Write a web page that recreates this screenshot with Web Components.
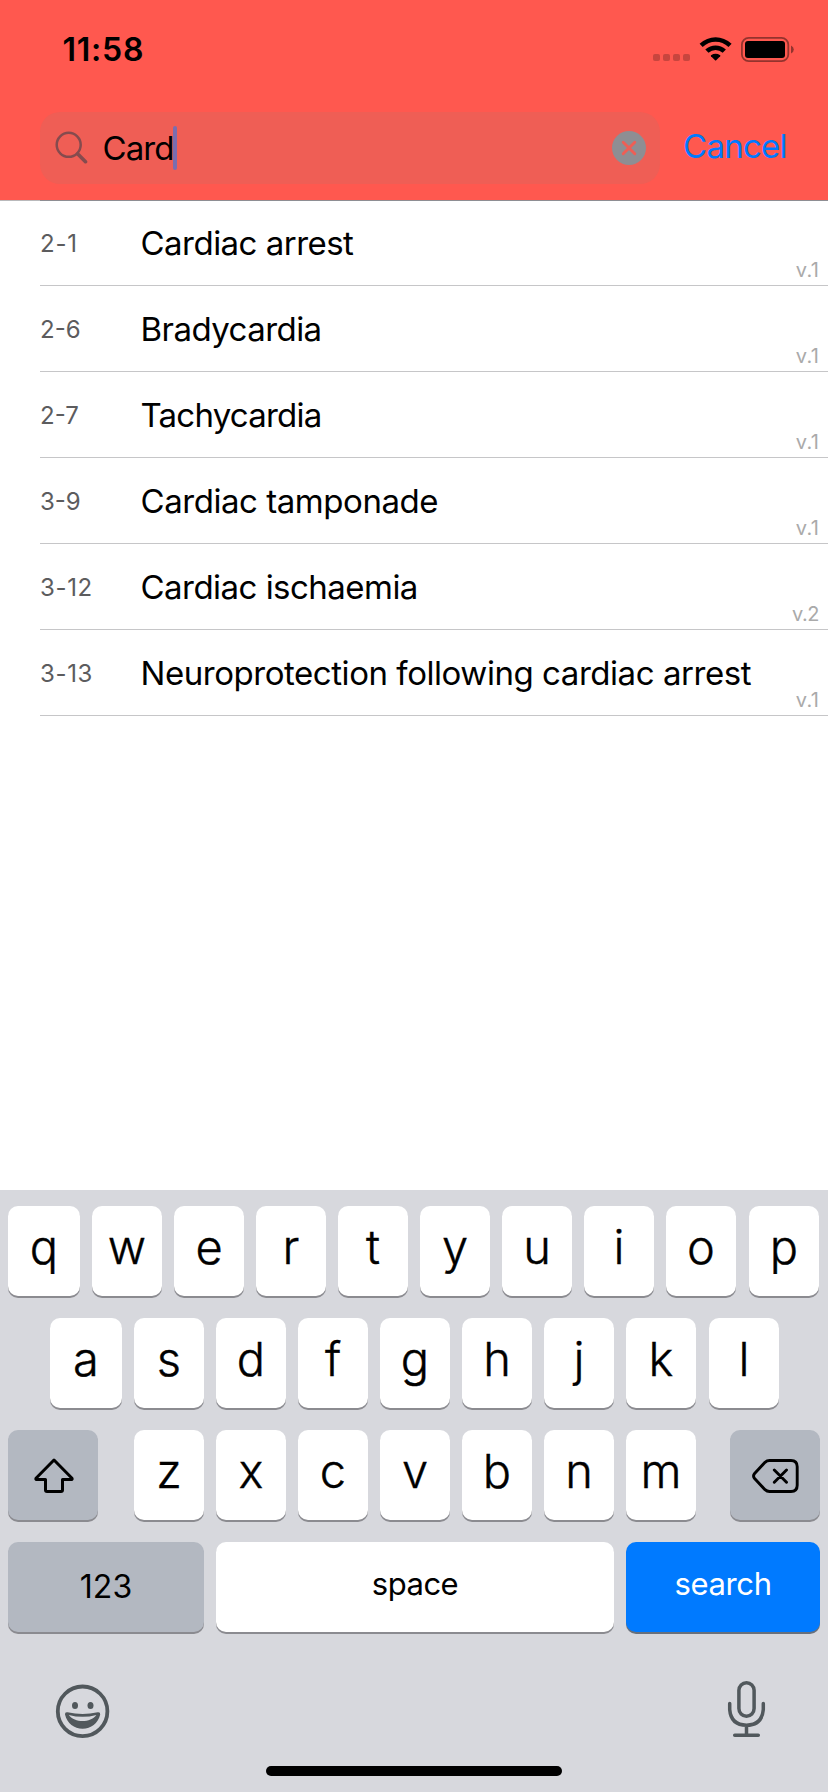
<!DOCTYPE html>
<html lang="en">
<head>
<meta charset="utf-8">
<title>Search</title>
<style>
  html, body { margin: 0; background: #fff; }
  body { font-family: Inter, "Liberation Sans", sans-serif; color: #000; }
</style>
</head>
<body>
<phone-screen>
  <status-bar slot="header" time="11:58"></status-bar>
  <search-bar slot="header" value="Card" action="Cancel"></search-bar>
  <result-row code="2-1" version="v.1" code-ls="0.75" title-ls="-0.52">Cardiac arrest</result-row>
  <result-row code="2-6" version="v.1" code-ls="0" title-ls="-0.55">Bradycardia</result-row>
  <result-row code="2-7" version="v.1" code-ls="0" title-ls="-0.78">Tachycardia</result-row>
  <result-row code="3-9" version="v.1" code-ls="0" title-ls="-0.45">Cardiac tamponade</result-row>
  <result-row code="3-12" version="v.2" version-ls="-0.45" code-ls="0.65" title-ls="-0.53">Cardiac ischaemia</result-row>
  <result-row code="3-13" version="v.1" code-ls="0.65" title-ls="-0.45">Neuroprotection following cardiac arrest</result-row>
  <touch-keyboard slot="keyboard"></touch-keyboard>
</phone-screen>

<script>
const define = (name, html, fill) => customElements.define(name, class extends HTMLElement {
  constructor() {
    super();
    const t = document.createElement('template');
    t.innerHTML = html;
    this.attachShadow({ mode: 'open' }).append(t.content.cloneNode(true));
  }
  connectedCallback() { if (fill) fill(this, this.shadowRoot); }
});

define('phone-screen', `
<style>
  :host { display: flex; flex-direction: column; width: 828px; height: 1792px; overflow: hidden; background: #fff; }
  header { height: 200px; flex: none; background: #ff584f; }
  main { flex: 1; min-height: 0; position: relative; }
  .rule { position: absolute; top: 0; left: 0; right: 0; height: 1px; background: linear-gradient(90deg, #b9b9bb 40px, #8e8e93 40px); }
</style>
<header><slot name="header"></slot></header>
<main><slot></slot><div class="rule"></div></main>
<slot name="keyboard"></slot>`);

define('status-bar', `
<style>
  :host { display: flex; justify-content: space-between; height: 99px; padding: 0 34px 0 62.5px; }
  .time { font-size: 32px; font-weight: 600; line-height: 99px; letter-spacing: .75px; white-space: nowrap; }
  svg { display: block; margin-top: 32px; }
</style>
<span class="time"></span>
<svg width="142" height="34" viewBox="652 32 142 34">
  <g opacity=".21"><rect x="653" y="54" width="7" height="7" rx="2"/><rect x="663" y="54" width="7" height="7" rx="2"/><rect x="673" y="54" width="7" height="7" rx="2"/><rect x="683" y="54" width="7" height="7" rx="2"/></g>
  <path d="M699.6 43.8Q706.700 37.200 715.600 37.200T731.600 43.800L728.500 47Q722.800 41.800 715.600 41.800T702.700 47Z"/>
  <path d="M705.300 49.500Q710 45.600 715.600 45.600T725.900 49.500L722.700 52.800Q719.500 50.100 715.600 50.100T708.500 52.800Z"/>
  <path d="M711 55.300Q715.600 52.400 720.200 55.300Q720.600 55.700 720.200 56.200L716.200 60.300Q715.600 60.900 715 60.300L711 56.200Q710.600 55.700 711 55.300Z"/>
  <rect x="741.900" y="37.900" width="46.400" height="23.300" rx="6.800" fill="none" stroke="#000" stroke-opacity=".42" stroke-width="1.800"/>
  <rect x="745" y="41" width="40" height="17" rx="3"/>
  <path d="M791 45.500Q793.800 46.800 793.800 49.500T791 53.500Z" opacity=".42"/>
</svg>`, (el, r) => { r.querySelector('.time').textContent = el.getAttribute('time'); });

define('search-bar', `
<style>
  :host { display: flex; align-items: flex-start; padding: 13px 0 0 40px; font-size: 33px; }
  .field { display: flex; align-items: center; box-sizing: border-box; width: 620px; height: 72px; padding: 0 14px 0 15px; border-radius: 20px; background: #ef5e55; }
  .value { margin-left: 14.5px; letter-spacing: -.95px; line-height: 72px; }
  .caret { width: 4px; height: 44px; border-radius: 2px; background: #7b6dae; }
  .clear { margin-left: auto; }
  .cancel { margin-left: 23px; line-height: 68px; color: #007aff; letter-spacing: -.72px; }
  svg { display: block; }
</style>
<div class="field">
  <svg width="33" height="34" viewBox="55 130.500 33 34" fill="none" stroke="#854b4e">
    <circle cx="68.700" cy="144.300" r="12" stroke-width="2.500"/>
    <path d="M77.800 153.400L85.500 161.200" stroke-width="3.600" stroke-linecap="round"/>
  </svg>
  <span class="value"></span><span class="caret"></span>
  <svg class="clear" width="34" height="34" viewBox="0 0 34 34"><circle cx="17" cy="17" r="17" fill="#8e8e93"/><path d="M11.200 11.200L22.800 22.800M22.800 11.200L11.200 22.800" stroke="#ef5e55" stroke-width="2.900" stroke-linecap="round"/></svg>
</div>
<span class="cancel"></span>`, (el, r) => {
  r.querySelector('.value').textContent = el.getAttribute('value');
  r.querySelector('.cancel').textContent = el.getAttribute('action');
});

define('result-row', `
<style>
  :host { display: grid; grid-template: 85px / 100px 1fr auto; box-sizing: border-box; height: 86px; margin-left: 40px; padding-right: 9px; border-bottom: 1px solid #c6c6c8; white-space: nowrap; line-height: 86px; }
  .code { font-size: 24px; line-height: 88px; color: #5c5c5e; }
  .title { font-size: 33px; padding-left: .5px; }
  .version { font-size: 20px; line-height: 24px; color: #aaa; align-self: end; padding-bottom: 3px; letter-spacing: .2px; }
</style>
<span class="code"></span><span class="title"><slot></slot></span><span class="version"></span>`, (el, r) => {
  const code = r.querySelector('.code'), version = r.querySelector('.version');
  code.textContent = el.getAttribute('code');
  code.style.letterSpacing = el.getAttribute('code-ls') + 'px';
  r.querySelector('.title').style.letterSpacing = el.getAttribute('title-ls') + 'px';
  version.textContent = el.getAttribute('version');
  if (el.hasAttribute('version-ls')) version.style.letterSpacing = el.getAttribute('version-ls') + 'px';
});

define('key-cap', `
<style>
  :host { display: flex; align-items: center; justify-content: center; box-sizing: border-box; flex: none; width: 70px; height: 90px; padding-bottom: 8px; border-radius: 10px; background: #fff; box-shadow: 0 2px 0 #8b8b90; font-size: 47px; font-weight: 300; line-height: 82px; -webkit-text-stroke: .4px #000; }
  :host([kind=first]) { width: 72px; }
  :host([kind=last]) { margin-left: 1px; }
  :host([kind=mod]) { width: 90px; background: #b3b8c1; padding: 0; }
  :host([kind=numbers]), :host([kind=space]), :host([kind=go]) { font-weight: 400; -webkit-text-stroke: 0; }
  :host([kind=numbers]) { width: 196px; background: #b3b8c1; padding: 0; font-size: 32px; }
  :host([kind=space]) { width: 398px; padding-bottom: 6px; font-size: 31px; letter-spacing: -.5px; }
  :host([kind=go]) { width: 194px; padding-bottom: 6px; font-size: 31px; letter-spacing: -.35px; background: #007aff; color: #fff; box-shadow: 0 2px 0 #68707c; }
</style>
<slot></slot>`);

define('touch-keyboard', `
<style>
  :host { display: flex; flex-direction: column; gap: 22px; flex: none; box-sizing: border-box; height: 602px; padding: 16px 8px 0; background: #d7d8dd; }
  .row { display: flex; gap: 12px; height: 90px; }
  .second { padding-left: 42px; }
  .third > :nth-child(2) { margin-left: 24px; }
  .third > :last-child { margin-left: 22px; }
  .tools { display: flex; justify-content: space-between; align-items: flex-start; box-sizing: border-box; height: 90px; padding: 25px 54px 0 47px; }
  .tools > :first-child { margin-top: 4px; }
  .home { width: 296px; height: 10px; border-radius: 5px; background: #000; margin-left: 258px; }
  svg { display: block; flex: none; }
</style>
<div class="row"><key-cap kind="first">q</key-cap><key-cap>w</key-cap><key-cap>e</key-cap><key-cap>r</key-cap><key-cap>t</key-cap><key-cap>y</key-cap><key-cap>u</key-cap><key-cap>i</key-cap><key-cap>o</key-cap><key-cap kind="last">p</key-cap></div>
<div class="row second"><key-cap kind="first">a</key-cap><key-cap>s</key-cap><key-cap>d</key-cap><key-cap>f</key-cap><key-cap>g</key-cap><key-cap>h</key-cap><key-cap>j</key-cap><key-cap>k</key-cap><key-cap kind="last">l</key-cap></div>
<div class="row third">
  <key-cap kind="mod"><svg width="90" height="90" viewBox="8 1430 90 90" fill="none" stroke="#000" stroke-width="3" stroke-linejoin="round"><path d="M54 1460L72 1478.200Q72.500 1479.500 71.500 1479.500H62.500V1490Q62.500 1491.500 61 1491.500H47Q45.500 1491.500 45.500 1490V1479.500H36.500Q35.500 1479.500 36 1478.200Z"/></svg></key-cap><key-cap>z</key-cap><key-cap>x</key-cap><key-cap>c</key-cap><key-cap>v</key-cap><key-cap>b</key-cap><key-cap>n</key-cap><key-cap>m</key-cap><key-cap kind="mod"><svg width="90" height="90" viewBox="730 1430 90 90" fill="none" stroke="#000" stroke-width="2.900" stroke-linecap="round" stroke-linejoin="round"><path d="M769.500 1460.500H791Q797.200 1460.500 797.200 1466.700V1485.300Q797.200 1491.500 791 1491.500H769.500Q767 1491.500 765 1489.700L754.600 1478.500Q752.500 1476 754.600 1473.500L765 1462.300Q767 1460.500 769.500 1460.500ZM774.300 1470L786.500 1482.200M786.500 1470L774.300 1482.200"/></svg></key-cap>
</div>
<div class="row"><key-cap kind="numbers">123</key-cap><key-cap kind="space">space</key-cap><key-cap kind="go">search</key-cap></div>
<div class="tools">
  <svg width="56" height="56" viewBox="55 1683 56 56">
    <circle cx="82.600" cy="1711.300" r="24.800" fill="none" stroke="#51585c" stroke-width="3.800"/>
    <g fill="#51585c"><ellipse cx="75" cy="1705.500" rx="3" ry="3.500"/><ellipse cx="90.500" cy="1705.500" rx="3" ry="3.500"/>
    <path fill-rule="evenodd" d="M67.500 1712.300Q82.600 1715.800 97.700 1712.300Q100.500 1711.900 100.200 1714.600C98 1723.500 91 1728.800 82.600 1728.800S67.200 1723.500 65 1714.600Q64.700 1711.900 67.500 1712.300ZM68.800 1714.900C72 1719 77 1721 82.600 1721S93.200 1719 96.400 1714.900Q82.600 1718.700 68.800 1714.900Z"/></g>
  </svg>
  <svg width="40" height="60" viewBox="726 1679 40 60" fill="none" stroke="#51585c" stroke-width="3.500" stroke-linecap="round">
    <rect x="738.900" y="1682.700" width="15.200" height="33.500" rx="7.600"/>
    <path d="M729.700 1703.500V1709.500Q731 1725.200 746.500 1725.200T763.300 1709.500V1703.500M746.500 1725.200V1735M734.700 1735.200H758.300"/>
  </svg>
</div>
<div class="home"></div>`);
</script>
</body>
</html>
